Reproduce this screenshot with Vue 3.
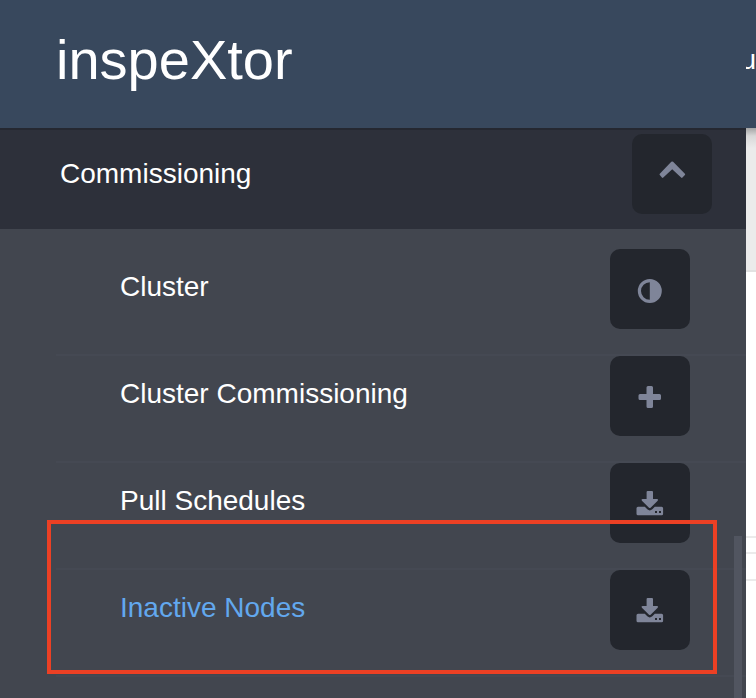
<script setup>
import { ref } from 'vue'

const open = ref(true)
const items = [
  { label: 'Cluster', icon: 'contrast' },
  { label: 'Cluster Commissioning', icon: 'plus' },
  { label: 'Pull Schedules', icon: 'download' },
  { label: 'Inactive Nodes', icon: 'download', active: true },
]
</script>

<template>
  <div class="page">
    <header class="topbar">
      <a class="brand" href="#">inspeXtor</a>
      <div class="user">u</div>
    </header>
    <div class="body">
      <nav class="sidebar">
        <div class="section">
          <span class="section-label">Commissioning</span>
          <button class="tile" type="button" aria-label="Toggle Commissioning" :aria-expanded="open" @click="open = !open">
            <svg class="icon" viewBox="0 0 26 26" aria-hidden="true">
              <path d="M12.300 0.800q0.900-0.800 1.800 0l11.800 11.900q0.600 0.700 0 1.400l-2.400 2.500q-0.700 0.600-1.400 0L13.200 8.300l-8.900 8.300q-0.700 0.600-1.400 0L0.800 14.100q-0.600-0.700 0-1.400z" />
            </svg>
          </button>
        </div>
        <ul v-if="open" class="list">
          <li v-for="item in items" :key="item.label" class="item" :class="{ active: item.active }">
            <a class="link" href="#">
              <span class="label">{{ item.label }}</span>
              <span class="tile">
                <svg v-if="item.icon === 'contrast'" class="icon" viewBox="0 0 26 26" aria-hidden="true">
                  <path fill-rule="evenodd" d="M12.800 3a12 12 0 1 1 0 24a12 12 0 0 1 0-24zM12.800 6.200a8.800 8.800 0 0 0 0 17.600z" />
                </svg>
                <svg v-else-if="item.icon === 'plus'" class="icon" viewBox="0 0 26 26" aria-hidden="true">
                  <path d="M11 3h3.500q1.500 0 1.500 1.500V11h6.500q1.500 0 1.500 1.500v3q0 1.500-1.500 1.500H16v6.500q0 1.500-1.500 1.500H11q-1.500 0-1.500-1.500V17H3q-1.500 0-1.500-1.500v-3Q1.500 11 3 11h6.500V4.500Q9.500 3 11 3z" />
                </svg>
                <svg v-else class="icon" viewBox="0 0 26 26" aria-hidden="true">
                  <path d="M10.600 1h4.400q1 0 1 1v7h4q1.900 0.300 0.700 1.700l-7.100 7q-0.800 0.700-1.600 0l-7.100-7Q3.700 9.300 5.600 9h4V2q0-1 1-1z" />
                  <path fill-rule="evenodd" d="M1 16.800h6.800l2.500 2.500q2.500 2.200 5 0l2.500-2.500h6.800q1.500 0 1.500 1.500v5.400q0 1.500-1.500 1.500H1q-1.500 0-1.500-1.500v-5.400q0-1.500 1.500-1.500zM18 21v2h2v-2zM22 21v2h2v-2z" />
                </svg>
              </span>
            </a>
          </li>
        </ul>
        <div class="scroll-thumb"></div>
      </nav>
      <main class="content">
        <div class="content-head"></div>
        <div class="content-main"></div>
        <div class="content-row"></div>
        <div class="content-row tall"></div>
      </main>
    </div>
  </div>
</template>

<style>
body {
  margin: 0;
}
</style>

<style scoped>
.page {
  display: flex;
  flex-direction: column;
  min-height: 100vh;
  overflow: hidden;
  font-family: "Liberation Sans", Arial, sans-serif;
  font-size: 28px;
  line-height: 32px;
  color: #fff;
}
.topbar {
  display: flex;
  align-items: center;
  justify-content: space-between;
  height: 128px;
  padding-bottom: 8px;
  box-sizing: border-box;
  background: #38485d;
}
.brand {
  padding-left: 56px;
  font-size: 56px;
  line-height: 64px;
  color: #fff;
  text-decoration: none;
}
.user {
  display: flex;
  justify-content: flex-end;
  width: 10px;
  overflow: hidden;
}
.body {
  display: flex;
  flex: 1;
}
.sidebar {
  position: relative;
  flex: 1;
  background: #42464f;
}
.section {
  display: flex;
  align-items: flex-start;
  justify-content: space-between;
  padding: 4px 34px 15px 60px;
  border-top: 2px solid #252831;
  background: #2d303a;
}
.section-label {
  padding-top: 24px;
}
.label {
  padding-top: 22px;
}
.tile {
  display: flex;
  align-items: center;
  justify-content: center;
  box-sizing: border-box;
  width: 80px;
  height: 80px;
  padding: 0;
  border: 0;
  border-radius: 10px;
  background: #23262d;
}
.icon {
  width: 26px;
  height: 26px;
  overflow: visible;
  fill: #7f8599;
}
.list {
  margin: 0;
  padding: 20px 0 0 56px;
  list-style: none;
}
.item {
  position: relative;
  border-bottom: 2px solid #454953;
}
.link {
  display: flex;
  align-items: flex-start;
  justify-content: space-between;
  padding: 0 56px 25px 64px;
  color: #fff;
  text-decoration: none;
}
.active .link {
  color: #62a8ee;
}
.active::after {
  content: "";
  position: absolute;
  top: -50px;
  right: 29px;
  bottom: 1px;
  left: -9px;
  border: 4px solid #ec4024;
  pointer-events: none;
}
.scroll-thumb {
  position: absolute;
  top: 408px;
  right: 4px;
  bottom: 0;
  width: 8px;
  background: #515560;
}
.content {
  display: flex;
  flex-direction: column;
  width: 10px;
  background: #fff;
}
.content-head {
  height: 142px;
  border-bottom: 2px solid #e2e2e2;
  background: linear-gradient(#a4a4a4, #d8d8d8 8px, #ebebeb 20px);
}
.content-main {
  height: 264px;
  border-bottom: 2px solid #ebebeb;
}
.content-row {
  height: 14px;
  border-bottom: 2px solid #ebebeb;
}
.content-row.tall {
  height: 25px;
}
</style>
